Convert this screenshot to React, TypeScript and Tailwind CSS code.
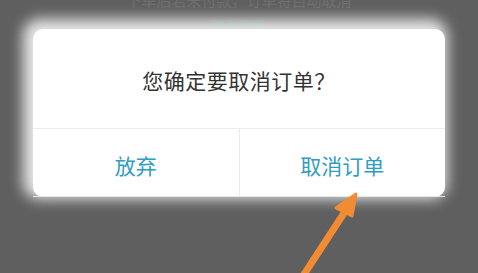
import React from 'react';

const cjk = { fontFamily: '"Noto Sans CJK SC", "Noto Sans", sans-serif' };

export default function App() {
  return (
    <div className="relative w-[478px] h-[273px] overflow-hidden bg-[#5f5f5f]" style={cjk}>
      {/* page behind the overlay */}
      <div className="flex flex-col items-center pt-0 -mt-[9px]">
        <p className="text-[15px] leading-[18px] text-[#6f6f6f]">下单后若未付款，订单将自动取消</p>
        <p className="mt-[8px] text-[13px] leading-[16px] text-[#3f7a62]">联系客服</p>
      </div>

      {/* dialog */}
      <div className="absolute left-[33px] top-[29px] w-[412px] h-[168px] flex flex-col rounded-[10px] bg-white shadow-[-4px_-4px_14px_6px_rgba(255,255,255,0.85)]">
        <div className="h-[99px] flex items-center justify-center pt-[2px]">
          <p className="text-[21px] leading-[24px] text-[#333333] tracking-[0.5px]">您确定要取消订单？</p>
        </div>
        <div className="flex-1 flex border-t border-[#ededed] border-b border-b-[#e4e4e4]">
          <button className="flex-1 flex items-center justify-center pt-[6px] text-[21px] text-[#2f9cc3]">放弃</button>
          <div className="w-px bg-[#ebebeb]" />
          <button className="flex-1 flex items-center justify-center pt-[6px] text-[21px] text-[#2f9cc3]">取消订单</button>
        </div>
      </div>

      {/* annotation arrow */}
      <svg className="absolute left-0 top-0" width="478" height="273" viewBox="0 0 478 273">
        <line x1="303" y1="276" x2="346" y2="210" stroke="#f28b32" strokeWidth="7" strokeLinecap="round" />
        <polygon points="356,194 336,208 352,216" fill="#f28b32" stroke="#f28b32" strokeWidth="3" strokeLinejoin="round" />
      </svg>
    </div>
  );
}
